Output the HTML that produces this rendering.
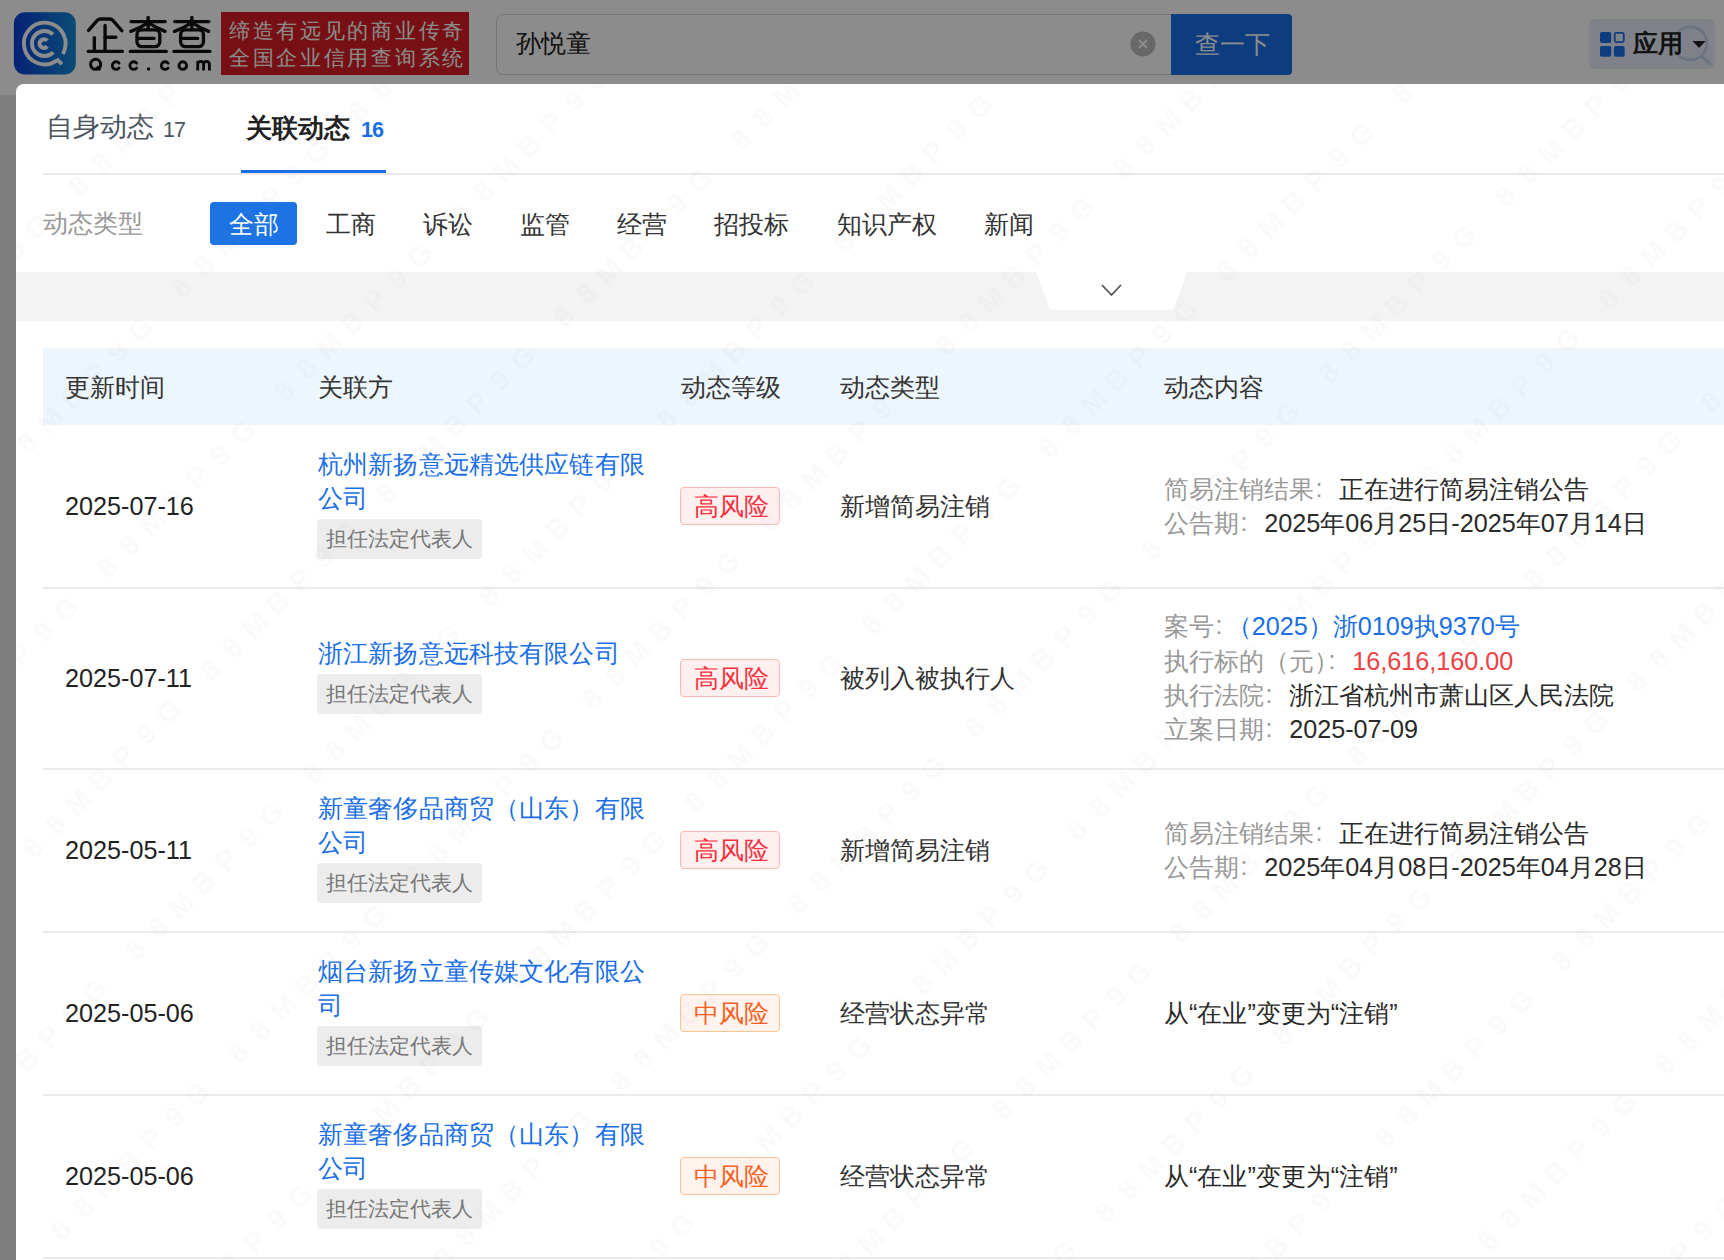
<!DOCTYPE html>
<html><head><meta charset="utf-8">
<style>
*{margin:0;padding:0;box-sizing:border-box}
html,body{width:1724px;height:1260px;overflow:hidden;background:#e8e8e8;font-family:"Liberation Sans",sans-serif;}
.abs{position:absolute;white-space:nowrap}
#page{position:absolute;left:0;top:0;width:1724px;height:1260px;overflow:hidden}
#hdr{position:absolute;left:0;top:0;width:1724px;height:95px;background:#fff}
#mask{position:absolute;left:0;top:0;width:1724px;height:1260px;background:rgba(0,0,0,0.45)}
#modal{position:absolute;left:16px;top:84px;width:1760px;height:1300px;background:#fff;border-radius:8px 0 0 0}
.t{position:absolute;white-space:nowrap;line-height:1}
.c{display:inline-block;width:25.2px;font-style:normal;position:relative;top:-1px;text-indent:1.5px;color:#999}
</style></head><body>
<div id="page">
<div id="hdr">
<svg class="abs" style="left:10px;top:8px" width="70" height="70" viewBox="0 0 1260 1260">
<defs><linearGradient id="lg" x1="0" y1="0" x2="1" y2="0"><stop offset="0" stop-color="#0a40d8"/><stop offset="1" stop-color="#148ad6"/></linearGradient></defs>
<rect x="70" y="75" width="1115" height="1120" rx="200" fill="url(#lg)"/>
<g fill="none" stroke="#fff" stroke-width="70">
<path d="M950 827 A375 375 0 1 0 840 947"/>
<path d="M835 915 L935 1010"/>
<path d="M773 475 A225 225 0 1 0 779 799"/>
<path d="M670 590 A78 78 0 1 0 670 690" stroke-width="75"/>
</g></svg>
<svg class="abs" style="left:84px;top:12px" width="132" height="64" viewBox="0 0 1724 836">
<g fill="none" stroke="#111" stroke-width="44" stroke-linecap="round" stroke-linejoin="round">
<path d="M60 240 L170 112 Q188 92 218 92 L335 92 Q362 92 380 112 L495 245"/>
<path d="M275 175 L275 500"/><path d="M275 330 L415 330"/><path d="M135 335 L135 500"/><path d="M55 515 L500 515"/>
<g><path d="M615 125 L1060 125"/><path d="M838 70 L838 230"/>
<path d="M612 253 Q740 210 836 140"/><path d="M840 140 Q930 200 1058 253"/>
<rect x="692" y="234" width="298" height="218" rx="62"/><path d="M720 345 L915 345"/>
<path d="M605 515 L1075 515"/></g>
<g transform="translate(570 0)"><path d="M615 125 L1060 125"/><path d="M838 70 L838 230"/>
<path d="M612 253 Q740 210 836 140"/><path d="M840 140 Q930 200 1058 253"/>
<rect x="692" y="234" width="298" height="218" rx="62"/><path d="M720 345 L915 345"/>
<path d="M605 515 L1075 515"/></g>
<circle cx="152" cy="683" r="66" stroke-width="39"/><path d="M168 712 L212 758" stroke-width="37" stroke-linecap="butt"/>
<path d="M458 668 A50 50 0 1 0 458 732" stroke-width="37"/>
<path d="M688 668 A50 50 0 1 0 688 732" stroke-width="37"/>
<path d="M1098 668 A50 50 0 1 0 1098 732" stroke-width="37"/>
<circle cx="1290" cy="700" r="50" stroke-width="37"/>
<path d="M1485 765 L1485 640 M1485 690 Q1485 645 1525 645 Q1562 645 1562 690 L1562 765 M1562 690 Q1562 645 1600 645 Q1638 645 1638 690 L1638 765" stroke-width="37" stroke-linecap="butt"/>
</g>
<circle cx="843" cy="745" r="22" fill="#111"/>
</svg>
<div class="abs" style="left:221px;top:12px;width:248px;height:63px;background:#d81e26;"></div>
<div class="t" style="left:229px;top:19.5px;font-size:21px;color:#fff;letter-spacing:2.7px">缔造有远见的商业传奇</div>
<div class="t" style="left:229px;top:46.5px;font-size:21px;color:#fff;letter-spacing:2.7px">全国企业信用查询系统</div>
<div class="abs" style="left:496px;top:14px;width:690px;height:61px;background:transparent;border:1.8px solid #d5d5d5;border-radius:7px 0 0 7px;box-sizing:border-box"></div>
<div class="t" style="left:516px;top:31px;font-size:25.2px;color:#222;">孙悦童</div>
<svg class="abs" style="left:1130px;top:31px" width="26" height="26"><circle cx="13" cy="13" r="12.5" fill="#bdbdbd"/><path d="M9 9 L17 17 M17 9 L9 17" stroke="#fff" stroke-width="1.8"/></svg>
<div class="abs" style="left:1171px;top:14px;width:121px;height:61px;background:#1b70e8;border-radius:0 4px 4px 0"></div>
<div class="t" style="left:1194.5px;top:32px;font-size:25.2px;color:#fff;">查一下</div>
<div class="abs" style="left:1589px;top:19px;width:125.5px;height:49.5px;background:#e8eefa;border-radius:6px"></div>
<svg class="abs" style="left:1560px;top:10px" width="164" height="70"><g fill="none" stroke="#c4d2ea" stroke-width="2.6"><circle cx="130.3" cy="33.4" r="16.5"/><path d="M142 46.8 L149.5 53.5" stroke-width="3.4" stroke-linecap="round"/></g>
<g fill="#1b70e8"><rect x="40" y="22" width="11.3" height="11" rx="2"/><rect x="40" y="35.9" width="11.3" height="10.9" rx="2"/><rect x="53.8" y="35.9" width="10.9" height="10.9" rx="2"/></g>
<rect x="54.7" y="22.9" width="9.1" height="9.2" rx="1.5" fill="none" stroke="#1b70e8" stroke-width="1.8"/>
<path d="M132.4 30.9 L145.7 30.9 L139 38 Z" fill="#222"/></svg>
<div class="t" style="left:1633px;top:31px;font-size:25.2px;color:#222;font-weight:bold">应用</div>
</div>
<div id="mask"></div>
<div id="modal"></div>
<div class="t" style="left:46px;top:114px;font-size:26.6px;color:#4b5560;">自身动态</div>
<div class="t" style="left:163px;top:119px;font-size:21.6px;color:#4b5560;letter-spacing:-1px">17</div>
<div class="t" style="left:245.5px;top:115px;font-size:26.2px;color:#222;font-weight:bold">关联动态</div>
<div class="t" style="left:361px;top:119px;font-size:21.6px;color:#1a6fe6;font-weight:bold;letter-spacing:-1px">16</div>
<div class="abs" style="left:43px;top:173px;width:1700px;height:2px;background:#e9e9e9;"></div>
<div class="abs" style="left:241px;top:170px;width:145px;height:3px;background:#1a6fe6;"></div>
<div class="t" style="left:43px;top:211px;font-size:25.2px;color:#999;">动态类型</div>
<div class="abs" style="left:210px;top:202px;width:87px;height:43px;background:#1b73e4;border-radius:4px"></div>
<div class="t" style="left:229px;top:212px;font-size:25.2px;color:#fff;">全部</div>
<div class="t" style="left:326px;top:212px;font-size:25.2px;color:#333;">工商</div>
<div class="t" style="left:423px;top:212px;font-size:25.2px;color:#333;">诉讼</div>
<div class="t" style="left:520px;top:212px;font-size:25.2px;color:#333;">监管</div>
<div class="t" style="left:617px;top:212px;font-size:25.2px;color:#333;">经营</div>
<div class="t" style="left:714px;top:212px;font-size:25.2px;color:#333;">招投标</div>
<div class="t" style="left:837px;top:212px;font-size:25.2px;color:#333;">知识产权</div>
<div class="t" style="left:984px;top:212px;font-size:25.2px;color:#333;">新闻</div>
<div class="abs" style="left:16px;top:272px;width:1710px;height:49px;background:#f3f3f3;"></div>
<svg class="abs" style="left:1030px;top:272px" width="164" height="40"><path d="M6 0 L157 0 L144.5 35 Q143 38 140 38 L23 38 Q20 38 19 35 Z" fill="#fff"/><path d="M72 13 L81.5 23 L91 13" fill="none" stroke="#555" stroke-width="1.8"/></svg>
<div class="abs" style="left:43px;top:348px;width:1690px;height:77px;background:#edf5fd;"></div>
<div class="t" style="left:65px;top:375px;font-size:25.2px;color:#333;">更新时间</div>
<div class="t" style="left:318px;top:375px;font-size:25.2px;color:#333;">关联方</div>
<div class="t" style="left:681px;top:375px;font-size:25.2px;color:#333;">动态等级</div>
<div class="t" style="left:840px;top:375px;font-size:25.2px;color:#333;">动态类型</div>
<div class="t" style="left:1164px;top:375px;font-size:25.2px;color:#333;">动态内容</div>
<div class="abs" style="left:43px;top:587px;width:1690px;height:1.8px;background:#ebebeb;"></div>
<div class="t" style="left:65px;top:494.4px;font-size:25.2px;color:#222;">2025-07-16</div>
<div class="t" style="left:318px;top:452.0px;font-size:25.2px;color:#1a6fe6;letter-spacing:0.15px">杭州新扬意远精选供应链有限</div>
<div class="t" style="left:318px;top:486.3px;font-size:25.2px;color:#1a6fe6;letter-spacing:0.15px">公司</div>
<div class="abs" style="left:317px;top:519.2px;width:165px;height:40px;background:#ececec;border-radius:4px"></div>
<div class="t" style="left:325.5px;top:528.2px;font-size:21px;color:#777;">担任法定代表人</div>
<div class="abs" style="left:680px;top:487.0px;width:100px;height:38px;border:1.8px solid #fcb6b6;background:#fff0f0;border-radius:4px"></div>
<div class="t" style="left:693.5px;top:494.3px;font-size:25.2px;color:#fa2f3d;">高风险</div>
<div class="t" style="left:840px;top:494.0px;font-size:25.2px;color:#333;">新增简易注销</div>
<div class="t" style="left:1164px;top:477.1px;font-size:25.2px;color:#2a2a2a;"><span style="color:#999">简易注销结果<i class="c">:</i></span>正在进行简易注销公告</div>
<div class="t" style="left:1164px;top:511.3px;font-size:25.2px;color:#2a2a2a;"><span style="color:#999">公告期<i class="c">:</i></span>2025年06月25日-2025年07月14日</div>
<div class="abs" style="left:43px;top:768px;width:1690px;height:1.8px;background:#ebebeb;"></div>
<div class="t" style="left:65px;top:665.9px;font-size:25.2px;color:#222;">2025-07-11</div>
<div class="t" style="left:318px;top:640.5px;font-size:25.2px;color:#1a6fe6;letter-spacing:0.15px">浙江新扬意远科技有限公司</div>
<div class="abs" style="left:317px;top:674.0px;width:165px;height:40px;background:#ececec;border-radius:4px"></div>
<div class="t" style="left:325.5px;top:683.0px;font-size:21px;color:#777;">担任法定代表人</div>
<div class="abs" style="left:680px;top:658.5px;width:100px;height:38px;border:1.8px solid #fcb6b6;background:#fff0f0;border-radius:4px"></div>
<div class="t" style="left:693.5px;top:665.8px;font-size:25.2px;color:#fa2f3d;">高风险</div>
<div class="t" style="left:840px;top:665.5px;font-size:25.2px;color:#333;">被列入被执行人</div>
<div class="t" style="left:1164px;top:614.4px;font-size:25.2px;color:#2a2a2a;"><span style="color:#999">案号<i class="c">:</i></span><span style="color:#1a6fe6;margin-left:-12.5px">（2025）浙0109执9370号</span></div>
<div class="t" style="left:1164px;top:648.6px;font-size:25.2px;color:#2a2a2a;"><span style="color:#999">执行标的（元<span style="display:inline-block;width:13px;overflow:hidden;vertical-align:top">）</span><i class="c">:</i></span><span style="color:#f04142;margin-left:0px">16,616,160.00</span></div>
<div class="t" style="left:1164px;top:682.8px;font-size:25.2px;color:#2a2a2a;"><span style="color:#999">执行法院<i class="c">:</i></span>浙江省杭州市萧山区人民法院</div>
<div class="t" style="left:1164px;top:717.0px;font-size:25.2px;color:#2a2a2a;"><span style="color:#999">立案日期<i class="c">:</i></span>2025-07-09</div>
<div class="abs" style="left:43px;top:931px;width:1690px;height:1.8px;background:#ebebeb;"></div>
<div class="t" style="left:65px;top:837.9px;font-size:25.2px;color:#222;">2025-05-11</div>
<div class="t" style="left:318px;top:795.5px;font-size:25.2px;color:#1a6fe6;letter-spacing:0.15px">新童奢侈品商贸（山东）有限</div>
<div class="t" style="left:318px;top:829.8px;font-size:25.2px;color:#1a6fe6;letter-spacing:0.15px">公司</div>
<div class="abs" style="left:317px;top:862.7px;width:165px;height:40px;background:#ececec;border-radius:4px"></div>
<div class="t" style="left:325.5px;top:871.7px;font-size:21px;color:#777;">担任法定代表人</div>
<div class="abs" style="left:680px;top:830.5px;width:100px;height:38px;border:1.8px solid #fcb6b6;background:#fff0f0;border-radius:4px"></div>
<div class="t" style="left:693.5px;top:837.8px;font-size:25.2px;color:#fa2f3d;">高风险</div>
<div class="t" style="left:840px;top:837.5px;font-size:25.2px;color:#333;">新增简易注销</div>
<div class="t" style="left:1164px;top:820.6px;font-size:25.2px;color:#2a2a2a;"><span style="color:#999">简易注销结果<i class="c">:</i></span>正在进行简易注销公告</div>
<div class="t" style="left:1164px;top:854.8px;font-size:25.2px;color:#2a2a2a;"><span style="color:#999">公告期<i class="c">:</i></span>2025年04月08日-2025年04月28日</div>
<div class="abs" style="left:43px;top:1094px;width:1690px;height:1.8px;background:#ebebeb;"></div>
<div class="t" style="left:65px;top:1000.9px;font-size:25.2px;color:#222;">2025-05-06</div>
<div class="t" style="left:318px;top:958.5px;font-size:25.2px;color:#1a6fe6;letter-spacing:0.15px">烟台新扬立童传媒文化有限公</div>
<div class="t" style="left:318px;top:992.8px;font-size:25.2px;color:#1a6fe6;letter-spacing:0.15px">司</div>
<div class="abs" style="left:317px;top:1025.7px;width:165px;height:40px;background:#ececec;border-radius:4px"></div>
<div class="t" style="left:325.5px;top:1034.7px;font-size:21px;color:#777;">担任法定代表人</div>
<div class="abs" style="left:680px;top:993.5px;width:100px;height:38px;border:1.8px solid #fdc393;background:#fff3ee;border-radius:4px"></div>
<div class="t" style="left:693.8px;top:1000.8px;font-size:25.2px;color:#fa6020;">中风险</div>
<div class="t" style="left:840px;top:1000.5px;font-size:25.2px;color:#333;">经营状态异常</div>
<div class="t" style="left:1164px;top:1000.7px;font-size:25.2px;color:#2a2a2a;">从“在业”变更为“注销”</div>
<div class="abs" style="left:43px;top:1257px;width:1690px;height:1.8px;background:#ebebeb;"></div>
<div class="t" style="left:65px;top:1163.9px;font-size:25.2px;color:#222;">2025-05-06</div>
<div class="t" style="left:318px;top:1121.5px;font-size:25.2px;color:#1a6fe6;letter-spacing:0.15px">新童奢侈品商贸（山东）有限</div>
<div class="t" style="left:318px;top:1155.8px;font-size:25.2px;color:#1a6fe6;letter-spacing:0.15px">公司</div>
<div class="abs" style="left:317px;top:1188.7px;width:165px;height:40px;background:#ececec;border-radius:4px"></div>
<div class="t" style="left:325.5px;top:1197.7px;font-size:21px;color:#777;">担任法定代表人</div>
<div class="abs" style="left:680px;top:1156.5px;width:100px;height:38px;border:1.8px solid #fdc393;background:#fff3ee;border-radius:4px"></div>
<div class="t" style="left:693.8px;top:1163.8px;font-size:25.2px;color:#fa6020;">中风险</div>
<div class="t" style="left:840px;top:1163.5px;font-size:25.2px;color:#333;">经营状态异常</div>
<div class="t" style="left:1164px;top:1163.7px;font-size:25.2px;color:#2a2a2a;">从“在业”变更为“注销”</div>
<svg class="abs" style="left:0;top:0;pointer-events:none" width="1724" height="1260"><defs><pattern id="wm" patternUnits="userSpaceOnUse" width="250.3" height="145.2" patternTransform="translate(1453,1070) rotate(-45) translate(-125.15,-72.6)"><g font-family="Liberation Sans" font-weight="bold" font-size="29" fill="rgb(170,170,170)" fill-opacity="0.055"><text x="29.2" y="83" text-anchor="middle">8</text><text x="61.2" y="83" text-anchor="middle">8</text><text x="93.2" y="83" text-anchor="middle">M</text><text x="125.2" y="83" text-anchor="middle">B</text><text x="157.2" y="83" text-anchor="middle">P</text><text x="189.2" y="83" text-anchor="middle">9</text><text x="221.2" y="83" text-anchor="middle">G</text></g></pattern></defs><rect x="16" y="84" width="1708" height="1176" fill="url(#wm)"/></svg>
</div>
</body></html>
